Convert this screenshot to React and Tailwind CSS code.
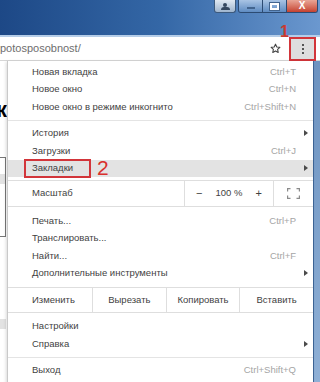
import React from "react";

const font = { fontFamily: '"Liberation Sans", Arial, sans-serif' };

function Arrow() {
  return (
    <svg width="4" height="6" viewBox="0 0 4 6" className="block">
      <path d="M0 0 L4 3 L0 6 Z" fill="#4a4a4a" />
    </svg>
  );
}

function Item({ label, shortcut, arrow, active, className = "" }) {
  return (
    <div className={`flex items-center h-[17.5px] pl-[24px] pr-[4px] ${active ? "bg-[#e3e3e3]" : ""} ${className}`}>
      <span className="flex-1 whitespace-nowrap">{label}</span>
      {shortcut && <span className="text-[#a5a5a5] whitespace-nowrap">{shortcut}</span>}
      <span className="w-[13px] flex justify-end pr-[1px]">{arrow && <Arrow />}</span>
    </div>
  );
}

function Sep() {
  return <div className="h-px bg-[#e4e4e4] my-[4px]" />;
}

function FullscreenIcon() {
  return (
    <svg width="13" height="11" viewBox="0 0 13 11" fill="none" stroke="#8a8a8a" strokeWidth="1.2">
      <path d="M0.6 3.5V0.6H3.5M9.5 0.6H12.4V3.5M12.4 7.5V10.4H9.5M3.5 10.4H0.6V7.5" />
    </svg>
  );
}

function StarIcon() {
  return (
    <svg width="11" height="11" viewBox="0 0 24 24" fill="none" stroke="#444" strokeWidth="2.4" strokeLinejoin="round">
      <path d="M12 2.5l2.9 6.1 6.6.8-4.9 4.6 1.3 6.6L12 17.3l-5.9 3.3 1.3-6.6-4.9-4.6 6.6-.8z" />
    </svg>
  );
}

export default function App() {
  return (
    <div className="relative w-[320px] h-[382px] overflow-hidden bg-white text-[9.5px] text-[#3f3f3f]" style={font}>
      {/* title bar */}
      <div className="h-[37px] flex justify-end bg-linear-to-r from-[#1d4886] via-[#3467a6] to-[#6b98cf] border-b-2 border-[#b5cde8]">
        <div className="flex items-start">
          <div className="w-[22px] h-[13px] mr-[2px] rounded-b-[3px] border border-t-0 border-[#3d5a7d] bg-linear-to-b from-[#dfe8f2] to-[#9fb5ce] flex items-end justify-center">
            <div className="flex flex-col items-center mb-[2px]">
              <div className="w-[4px] h-[4px] rounded-full bg-[#34475f]" />
              <div className="w-[9px] h-[3px] rounded-t-[3px] bg-[#34475f]" />
            </div>
          </div>
          <div className="flex h-[13px] rounded-b-[3px] border border-t-0 border-[#2c4b73] overflow-hidden">
            <div className="w-[24px] bg-linear-to-b from-[#a9c4e4] to-[#5f8cc2] flex items-center justify-center border-r border-[#2c4b73]">
              <div className="w-[8px] h-[2px] bg-white border border-[#42648e] mt-[3px]" />
            </div>
            <div className="w-[24px] bg-linear-to-b from-[#a9c4e4] to-[#5f8cc2] flex items-center justify-center border-r border-[#2c4b73]">
              <div className="w-[9px] h-[7px] border-2 border-white outline outline-[#42648e]" />
            </div>
            <div className="w-[30px] bg-linear-to-b from-[#e8a596] to-[#c4402f] flex items-center justify-center text-white font-bold text-[10px] leading-none">
              X
            </div>
          </div>
          <div className="w-[2px]" />
        </div>
      </div>

      {/* toolbar */}
      <div className="h-[24px] flex items-center bg-white border-b border-[#d6d6d6]">
        <span className="flex-1 text-[11px] text-[#6e6e6e] whitespace-nowrap">potosposobnost/</span>
        <span className="mr-[8px] flex items-center"><StarIcon /></span>
        <div className="w-[27px] h-[24px] mr-[4px] border-2 border-[#d2353a] bg-[#dedede] flex flex-col items-center justify-center gap-[2px]">
          <span className="w-[2px] h-[2px] bg-[#555]" />
          <span className="w-[2px] h-[2px] bg-[#555]" />
          <span className="w-[2px] h-[2px] bg-[#555]" />
        </div>
      </div>

      {/* page behind the menu */}
      <div className="flex">
        <div className="w-[313px] pt-[38px]">
          <div className="-ml-[4px] text-[22px] font-bold leading-[22px] text-black">к</div>
          <div className="mt-[36px] w-[6px] h-[80px] border border-l-0 border-[#777] bg-white flex flex-col">
            <div className="mt-[16px] h-[10px] bg-[#e2e2e2]" />
          </div>
          <div className="mt-[82px] w-[6px] h-[10px] bg-[#e2e2e2]" />
        </div>
        <div className="flex-1 h-[321px] bg-linear-to-b from-[#6d93c0] to-[#8fb0d6] border-l border-[#3e6698]" />
      </div>

      {/* chrome menu */}
      <div className="absolute left-[7px] top-[61px] w-[306px] h-[330px] bg-white border-l border-[#c9c9c9] shadow-[-1px_1px_3px_rgba(0,0,0,0.15)] pt-[2px]">
        <Item label="Новая вкладка" shortcut="Ctrl+T" />
        <Item label="Новое окно" shortcut="Ctrl+N" />
        <Item label="Новое окно в режиме инкогнито" shortcut="Ctrl+Shift+N" />
        <Sep />
        <Item label="История" arrow />
        <Item label="Загрузки" shortcut="Ctrl+J" />
        <Item label="Закладки" arrow active />

        <div className="mt-[3px] h-[27px] flex border-y border-[#dedede]">
          <div className="flex-1 pl-[24px] flex items-center">Масштаб</div>
          <div className="w-[89px] border-l border-[#dedede] flex items-center justify-between px-[11px]">
            <span className="text-[11px]">−</span>
            <span>100 %</span>
            <span className="text-[11px]">+</span>
          </div>
          <div className="w-[40px] border-l border-[#dedede] flex items-center justify-center">
            <FullscreenIcon />
          </div>
        </div>

        <Item label="Печать..." shortcut="Ctrl+P" className="mt-[5px]" />
        <Item label="Транслировать..." />
        <Item label="Найти..." shortcut="Ctrl+F" />
        <Item label="Дополнительные инструменты" arrow />

        <div className="mt-[5px] h-[26px] flex border-y border-[#dedede]">
          <div className="w-[84px] pl-[24px] flex items-center">Изменить</div>
          <div className="flex-1 border-l border-[#dedede] flex items-center justify-center">Вырезать</div>
          <div className="flex-1 border-l border-[#dedede] flex items-center justify-center">Копировать</div>
          <div className="flex-1 border-l border-[#dedede] flex items-center justify-center">Вставить</div>
        </div>

        <Item label="Настройки" className="mt-[4.5px]" />
        <Item label="Справка" arrow />
        <Sep />
        <Item label="Выход" shortcut="Ctrl+Shift+Q" />
      </div>

      {/* annotations */}
      <div className="absolute left-[24px] top-[159px] w-[67px] h-[19px] border-2 border-[#d2353a]" />
      <div className="absolute left-[97px] top-[157px] text-[21px] leading-[22px] text-[#d9302c]">2</div>
      <div className="absolute left-[280px] top-[24px] text-[16px] leading-[16px] font-bold text-[#c83a30]">1</div>
    </div>
  );
}
